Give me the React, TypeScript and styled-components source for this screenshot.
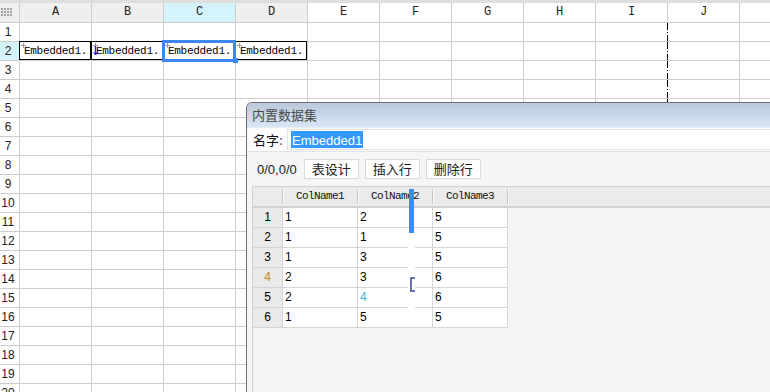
import React from 'react';
import styled, { createGlobalStyle, css } from 'styled-components';

const GlobalStyle = createGlobalStyle`
  html, body {
    margin: 0;
    padding: 0;
    background: #fff;
    overflow: hidden;
  }
`;

// K is only partly in view, its letter falls outside the window
const COLS = ['A', 'B', 'C', 'D', 'E', 'F', 'G', 'H', 'I', 'J', ''];
const ROWS = Array.from({ length: 20 }, (_, i) => i + 1);
const USED_COLS = 4;
const SELECTED_COL = 2;
const DATA_ROW = 2;
const PAGE_BREAK_COL = 8;

const TABLE_ROWS = [
    ['1', '2', '5'],
    ['1', '1', '5'],
    ['1', '3', '5'],
    ['2', '3', '6'],
    ['2', '4', '6'],
    ['1', '5', '5'],
];

const Screen = styled.div`
    position: relative;
    width: 770px;
    height: 392px;
    overflow: hidden;
    background: #fff;
`;

const TopStrip = styled.div`
    height: 3px;
    background: #dedede;
`;

const SheetGrid = styled.div`
    display: grid;
    grid-template-columns: 20px repeat(11, 72px);
    grid-template-rows: 20px;
    grid-auto-rows: 19px;
`;

const gridLines = css`
    box-sizing: border-box;
    border-right: 1px solid #cdcdcd;
    border-bottom: 1px solid #cdcdcd;
`;

const Corner = styled.div`
    ${gridLines};
    background: #efefef;
    display: flex;
    align-items: center;
    padding-left: 1px;
`;

const ColHead = styled.div<{ $used: boolean; $active: boolean }>`
    ${gridLines};
    background: ${p => (p.$active ? '#d4f3fb' : p.$used ? '#efefef' : '#fff')};
    font: 12px/19px "Liberation Mono", monospace;
    color: #222;
    text-align: center;
`;

const RowHead = styled.div<{ $active: boolean }>`
    ${gridLines};
    background: ${p => (p.$active ? '#d4f3fb' : '#fff')};
    font: 12px/18px "Liberation Sans", sans-serif;
    color: #222;
    text-align: center;
    padding-right: 3px;
    white-space: nowrap;
`;

const Cell = styled.div<{ $boxed?: boolean; $selected?: boolean; $pageBreak?: boolean }>`
    ${gridLines};
    position: relative;
    font: 11px/18px "Liberation Mono", monospace;
    letter-spacing: -0.3px;
    color: #000;
    padding-left: 4px;
    white-space: nowrap;
    overflow: visible;
    ${p =>
        p.$pageBreak &&
        css`
            border-right: none;
            padding-right: 1px;
            background: repeating-linear-gradient(
                    to bottom,
                    #000 0 7px,
                    transparent 7px 9px,
                    #000 9px 10px,
                    transparent 10px 12px
                )
                right top / 1px 100% no-repeat;
        `}
    ${p =>
        p.$boxed &&
        css`
            &::before {
                content: '';
                position: absolute;
                inset: -1px 0 0 -1px;
                border: 1px solid #000;
                pointer-events: none;
            }
        `}
    ${p =>
        p.$selected &&
        css`
            &::after {
                content: '';
                position: absolute;
                inset: -2px -1px -2px -2px;
                border: 3px solid #3a88f0;
                z-index: 2;
                pointer-events: none;
            }
        `}
`;

const CellMark = styled.svg`
    position: absolute;
    left: 1px;
    top: 1px;
`;

const FillHandle = styled.span`
    position: absolute;
    right: -3px;
    bottom: -3px;
    width: 5px;
    height: 5px;
    background: #3a88f0;
    z-index: 3;
`;

/* ---------- dialog ---------- */

const Dialog = styled.div`
    position: absolute;
    left: 246px;
    top: 102px;
    right: 0;
    bottom: 0;
    box-sizing: border-box;
    border-left: 1px solid #6e6e6e;
    border-top: 1px solid #6e6e6e;
    border-top-left-radius: 6px;
    background: #f5f5f5;
    display: flex;
    flex-direction: column;
    font-family: "Noto Sans CJK SC", "Liberation Sans", sans-serif;
    overflow: hidden;
`;

const TitleBar = styled.div`
    height: 25px;
    flex: none;
    box-sizing: border-box;
    padding-left: 5px;
    background: linear-gradient(to bottom, #b9c8da, #d8e6f5);
    border-bottom: 1px solid #e8ecf0;
    font-size: 13px;
    line-height: 24px;
    color: #4a4a4a;
`;

const NameRow = styled.div`
    height: 24px;
    flex: none;
    box-sizing: border-box;
    display: flex;
    align-items: center;
    gap: 4px;
    padding-left: 6px;
    background: #fbfbfb;
    border-bottom: 1px solid #e2e2e2;
`;

const Label = styled.span`
    font-size: 13px;
    color: #111;
    width: 30px;
    white-space: nowrap;

    b {
        font-weight: normal;
        color: #7a3d8c;
    }
`;

const NameInput = styled.div`
    flex: 1;
    height: 21px;
    box-sizing: border-box;
    background: #fff;
    border: 1px solid #e2e2e2;
    border-right: none;
    padding: 1px 3px;
    display: flex;
`;

const Highlight = styled.span`
    background: #3399ff;
    color: #fff;
    font: 13px/19px "Liberation Sans", sans-serif;
    padding: 0 1px;
`;

const Toolbar = styled.div`
    height: 34px;
    flex: none;
    display: flex;
    align-items: center;
    padding-left: 10px;
    gap: 6px;
`;

const Counter = styled.span`
    font: 13px "Liberation Sans", sans-serif;
    color: #222;
    margin-right: 1px;
`;

const ToolButton = styled.button`
    width: 55px;
    height: 20px;
    box-sizing: border-box;
    padding: 0;
    background: #fff;
    border: 1px solid #dadada;
    font-family: "Noto Sans CJK SC", sans-serif;
    font-size: 13px;
    line-height: 18px;
    color: #1a1a1a;
`;

const TablePanel = styled.div`
    flex: 1;
    margin-left: 5px;
    border-left: 1px solid #d2d2d2;
    border-top: 1px solid #d2d2d2;
    background: #f5f5f5;
`;

const HeadStrip = styled.div`
    height: 21px;
    box-sizing: border-box;
    display: flex;
    background: #ebebeb;
    border-bottom: 2px solid #d3d3d3;
`;

const HeadCell = styled.div<{ $w: number }>`
    width: ${p => p.$w}px;
    box-sizing: border-box;
    margin: 2px 0;
    border-right: 1px solid #c6c6c6;
    box-shadow: 1px 0 0 #fafafa;
    font: 11px/15px "Liberation Mono", monospace;
    letter-spacing: -0.6px;
    text-align: center;
    color: #111;
`;

const DataGrid = styled.div`
    display: grid;
    grid-template-columns: 30px repeat(3, 75px);
    grid-auto-rows: 20px;
`;

const DataCell = styled.div<{ $num?: boolean; $tint?: string }>`
    box-sizing: border-box;
    border-right: 1px solid #d6d6d6;
    border-bottom: 1px solid #d6d6d6;
    background: ${p => (p.$num ? '#e9e9e9' : '#fff')};
    font: 12px/19px "Liberation Sans", sans-serif;
    color: ${p => p.$tint || '#000'};
    text-align: ${p => (p.$num ? 'center' : 'left')};
    padding-left: ${p => (p.$num ? '0' : '2px')};
`;

/* rendering glitches over the dialog table */
const GlitchBar = styled.div`
    position: absolute;
    left: 409px;
    top: 189px;
    width: 5px;
    height: 44px;
    background: #3a8ef3;
`;

const GlitchGap = styled.div`
    position: absolute;
    left: 408px;
    top: 233px;
    width: 7px;
    height: 77px;
    background: #fff;
`;

const GlitchBracket = styled.div`
    position: absolute;
    left: 410px;
    top: 277px;
    width: 3px;
    height: 11px;
    border: 2px solid #6b6fb3;
    border-right: none;
`;

function GripIcon() {
    const dots = [];
    for (let r = 0; r < 3; r++) {
        for (let c = 0; c < 4; c++) {
            dots.push(<rect key={`${r}-${c}`} x={c * 3} y={r * 3} width={2} height={2} fill="#a0a0a0" />);
        }
    }
    return (
        <svg width="12" height="9" viewBox="0 0 12 9">
            {dots}
        </svg>
    );
}

function Mark({ blue }: { blue?: boolean }) {
    if (blue) {
        return (
            <CellMark width="6" height="13" viewBox="0 0 6 13">
                <path d="M0 2.5h5M2.5 0v5" stroke="#999" strokeWidth="1" />
                <path d="M2.5 3v9" stroke="#2222dd" strokeWidth="1.4" />
                <path d="M0.5 9l2 3 2-3" stroke="#2222dd" strokeWidth="1" fill="none" />
            </CellMark>
        );
    }
    return (
        <CellMark width="6" height="6" viewBox="0 0 6 6">
            <path d="M0 2.5h5M2.5 0v5" stroke="#999" strokeWidth="1" />
        </CellMark>
    );
}

function Sheet() {
    return (
        <>
            <TopStrip />
            <SheetGrid>
                <Corner>
                    <GripIcon />
                </Corner>
                {COLS.map((c, i) => (
                    <ColHead key={i} $used={i < USED_COLS} $active={i === SELECTED_COL}>
                        {c}
                    </ColHead>
                ))}
                {ROWS.map(r => (
                    <React.Fragment key={r}>
                        <RowHead $active={r === DATA_ROW}>{r}</RowHead>
                        {COLS.map((c, i) => {
                            const boxed = r === DATA_ROW && i < USED_COLS;
                            const selected = boxed && i === SELECTED_COL;
                            return (
                                <Cell
                                    key={i}
                                    $boxed={boxed}
                                    $selected={selected}
                                    $pageBreak={i === PAGE_BREAK_COL}
                                >
                                    {boxed ? (
                                        <>
                                            <Mark blue={i === 1} />
                                            Embedded1.
                                        </>
                                    ) : null}
                                    {selected ? <FillHandle /> : null}
                                </Cell>
                            );
                        })}
                    </React.Fragment>
                ))}
            </SheetGrid>
        </>
    );
}

function tintFor(row: number, col: number) {
    if (row === 3 && col === 0) return '#c8871f';
    if (row === 4 && col === 2) return '#3fb8d6';
    return undefined;
}

function DatasetDialog() {
    return (
        <Dialog>
            <TitleBar>内置数据集</TitleBar>
            <NameRow>
                <Label>
                    名字<b>:</b>
                </Label>
                <NameInput>
                    <Highlight>Embedded1</Highlight>
                </NameInput>
            </NameRow>
            <Toolbar>
                <Counter>0/0,0/0</Counter>
                <ToolButton>表设计</ToolButton>
                <ToolButton>插入行</ToolButton>
                <ToolButton>删除行</ToolButton>
            </Toolbar>
            <TablePanel>
                <HeadStrip>
                    <HeadCell $w={30} />
                    <HeadCell $w={75}>ColName1</HeadCell>
                    <HeadCell $w={75}>ColName2</HeadCell>
                    <HeadCell $w={75}>ColName3</HeadCell>
                </HeadStrip>
                <DataGrid>
                    {TABLE_ROWS.map((row, r) => (
                        <React.Fragment key={r}>
                            <DataCell $num $tint={tintFor(r, 0)}>
                                {r + 1}
                            </DataCell>
                            {row.map((v, c) => (
                                <DataCell key={c} $tint={tintFor(r, c + 1)}>
                                    {v}
                                </DataCell>
                            ))}
                        </React.Fragment>
                    ))}
                </DataGrid>
            </TablePanel>
        </Dialog>
    );
}

export default function App() {
    return (
        <Screen>
            <GlobalStyle />
            <Sheet />
            <DatasetDialog />
            <GlitchGap />
            <GlitchBar />
            <GlitchBracket />
        </Screen>
    );
}
